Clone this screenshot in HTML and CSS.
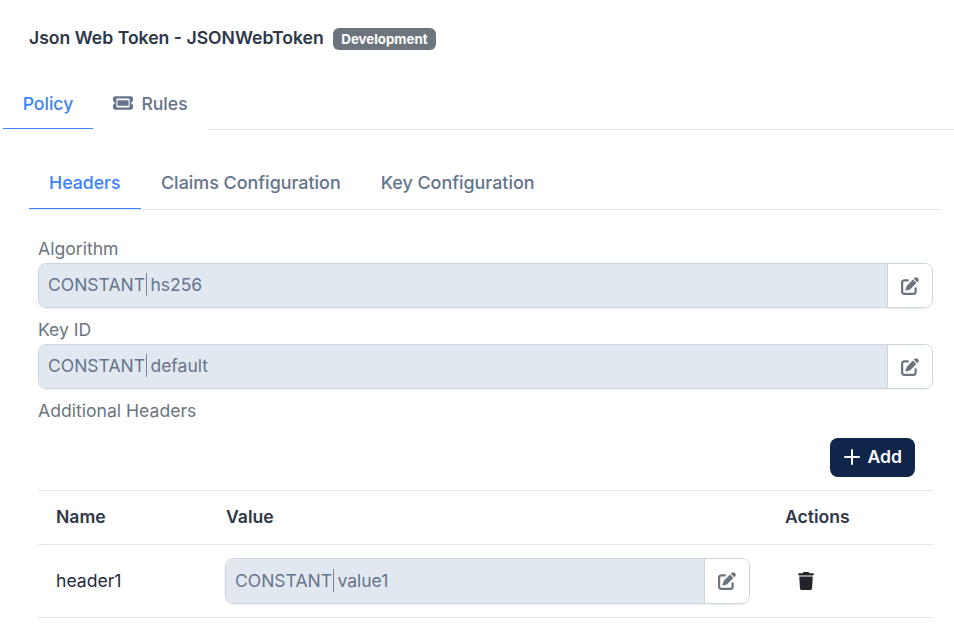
FILE: index.html
```html
<!DOCTYPE html>
<html lang="en">
<head>
<meta charset="utf-8">
<title>Json Web Token</title>
<link rel="stylesheet" href="styles.css">
</head>
<body>
<header class="title-row">
  <h1 class="title">Json Web Token - JSONWebToken</h1>
  <span class="badge">Development</span>
</header>
<nav class="tabs">
  <a class="tab tab-active">Policy</a>
  <a class="tab tab-rules">
    <svg class="icon-ticket" viewBox="0 0 576 512"><path fill="currentColor" d="M64 64C28.7 64 0 92.7 0 128v64c0 8.8 7.4 15.7 15.7 18.6C34.5 217.1 48 235 48 256s-13.5 38.9-32.3 45.4C7.4 304.3 0 311.2 0 320v64c0 35.3 28.7 64 64 64H512c35.3 0 64-28.7 64-64V320c0-8.8-7.4-15.7-15.7-18.6C541.5 294.9 528 277 528 256s13.5-38.9 32.3-45.4c8.3-2.9 15.7-9.8 15.7-18.6V128c0-35.3-28.7-64-64-64H64zm64 112l0 160H448V176H128zM96 160c0-17.7 14.3-32 32-32H448c17.7 0 32 14.3 32 32V352c0 17.7-14.3 32-32 32H128c-17.7 0-32-14.3-32-32V160z"/></svg>
    Rules
  </a>
  <span class="tabs-rest"></span>
</nav>
<section class="panel">
  <nav class="subtabs">
    <a class="subtab subtab-active">Headers</a>
    <a class="subtab">Claims Configuration</a>
    <a class="subtab">Key Configuration</a>
  </nav>
  <form class="form">
    <label class="label">Algorithm</label>
    <div class="field">
      <div class="value"><span>CONSTANT</span><i class="sep"></i><span>hs256</span></div>
      <button type="button" class="edit"><svg class="icon-edit" viewBox="0 0 512 512"><path fill="currentColor" d="M471.6 21.7c-21.9-21.9-57.3-21.9-79.2 0L362.3 51.7l97.9 97.9 30.1-30.1c21.9-21.9 21.9-57.3 0-79.2L471.6 21.7zm-299.2 220c-6.1 6.1-10.8 13.6-13.5 21.9l-29.6 88.8c-2.9 8.6-.6 18.1 5.8 24.6s15.9 8.7 24.6 5.8l88.8-29.6c8.2-2.7 15.7-7.4 21.9-13.5L437.7 172.3 339.7 74.3 172.4 241.7zM96 64C43 64 0 107 0 160V416c0 53 43 96 96 96H352c53 0 96-43 96-96V320c0-17.7-14.3-32-32-32s-32 14.3-32 32v96c0 17.7-14.3 32-32 32H96c-17.7 0-32-14.3-32-32V160c0-17.7 14.3-32 32-32h96c17.7 0 32-14.3 32-32s-14.3-32-32-32H96z"/></svg></button>
    </div>
    <label class="label">Key ID</label>
    <div class="field">
      <div class="value"><span>CONSTANT</span><i class="sep"></i><span>default</span></div>
      <button type="button" class="edit"><svg class="icon-edit" viewBox="0 0 512 512"><path fill="currentColor" d="M471.6 21.7c-21.9-21.9-57.3-21.9-79.2 0L362.3 51.7l97.9 97.9 30.1-30.1c21.9-21.9 21.9-57.3 0-79.2L471.6 21.7zm-299.2 220c-6.1 6.1-10.8 13.6-13.5 21.9l-29.6 88.8c-2.9 8.6-.6 18.1 5.8 24.6s15.9 8.7 24.6 5.8l88.8-29.6c8.2-2.7 15.7-7.4 21.9-13.5L437.7 172.3 339.7 74.3 172.4 241.7zM96 64C43 64 0 107 0 160V416c0 53 43 96 96 96H352c53 0 96-43 96-96V320c0-17.7-14.3-32-32-32s-32 14.3-32 32v96c0 17.7-14.3 32-32 32H96c-17.7 0-32-14.3-32-32V160c0-17.7 14.3-32 32-32h96c17.7 0 32-14.3 32-32s-14.3-32-32-32H96z"/></svg></button>
    </div>
    <label class="label">Additional Headers</label>
    <div class="add-row">
      <button type="button" class="add"><svg class="icon-plus" viewBox="0 0 16 16"><path d="M8 1v14M1 8h14" stroke="currentColor" stroke-width="2" fill="none" stroke-linecap="round"/></svg>Add</button>
    </div>
    <table class="table">
      <thead>
        <tr><th class="col-name">Name</th><th class="col-value">Value</th><th class="col-actions">Actions</th></tr>
      </thead>
      <tbody>
        <tr>
          <td class="col-name">header1</td>
          <td class="col-value">
            <div class="field field-row">
              <div class="value"><span>CONSTANT</span><i class="sep"></i><span>value1</span></div>
              <button type="button" class="edit"><svg class="icon-edit" viewBox="0 0 512 512"><path fill="currentColor" d="M471.6 21.7c-21.9-21.9-57.3-21.9-79.2 0L362.3 51.7l97.9 97.9 30.1-30.1c21.9-21.9 21.9-57.3 0-79.2L471.6 21.7zm-299.2 220c-6.1 6.1-10.8 13.6-13.5 21.9l-29.6 88.8c-2.9 8.6-.6 18.1 5.8 24.6s15.9 8.7 24.6 5.8l88.8-29.6c8.2-2.7 15.7-7.4 21.9-13.5L437.7 172.3 339.7 74.3 172.4 241.7zM96 64C43 64 0 107 0 160V416c0 53 43 96 96 96H352c53 0 96-43 96-96V320c0-17.7-14.3-32-32-32s-32 14.3-32 32v96c0 17.7-14.3 32-32 32H96c-17.7 0-32-14.3-32-32V160c0-17.7 14.3-32 32-32h96c17.7 0 32-14.3 32-32s-14.3-32-32-32H96z"/></svg></button>
            </div>
          </td>
          <td class="col-actions">
            <svg class="icon-trash" viewBox="0 0 448 512"><path fill="currentColor" d="M135.2 17.7L128 32H32C14.3 32 0 46.3 0 64S14.3 96 32 96H416c17.7 0 32-14.3 32-32s-14.3-32-32-32H320l-7.2-14.3C307.4 6.8 296.3 0 284.2 0H163.8c-12.1 0-23.2 6.8-28.6 17.7zM416 128H32L53.2 467c1.6 25.3 22.6 45 47.9 45H346.9c25.3 0 46.3-19.7 47.9-45L416 128z"/></svg>
          </td>
        </tr>
      </tbody>
    </table>
  </form>
</section>
</body>
</html>
```

FILE: styles.css
```css
* { box-sizing: border-box; }
html, body { margin: 0; padding: 0; }
body {
  height: 632px;
  overflow: hidden;
  background: #fff;
  font-family: Inter, "Liberation Sans", sans-serif;
  font-size: 17.6px;
  color: #212529;
}
.title-row {
  display: flex;
  align-items: center;
  gap: 9px;
  height: 76px;
  padding: 0 0 2px 29px;
}
.title { margin: 0; font-size: 17.6px; font-weight: 600; color: #2d3748; }
.badge {
  display: inline-block;
  margin-top: 4px;
  padding: 4px 8.5px;
  background: #6c757d;
  border-radius: 6px;
  color: #fff;
  font-size: 13.3px;
  font-weight: 700;
  line-height: 14px;
}
.tabs {
  display: flex;
  align-items: flex-end;
  height: 54px;
  padding-left: 3px;
}
.tab {
  display: flex;
  align-items: center;
  justify-content: center;
  height: 100%;
  font-size: 17.6px;
  font-weight: 500;
  color: #64748b;
}
.tab-active { width: 90px; color: #3b82f6; border-bottom: 1px solid #3b82f6; margin-bottom: 1px; padding-top: 3px; }
.tab-rules { width: 115px; gap: 8px; }
.icon-ticket { width: 20px; height: 18px; }
.tabs-rest { flex: 1; border-bottom: 1px solid #e2e8f0; }
.panel { padding: 0 13px 0 29px; }
.subtabs { display: flex; align-items: flex-end; height: 80px; border-bottom: 1px solid #e2e8f0; }
.subtab {
  display: flex;
  align-items: center;
  height: 54px;
  padding: 0 20px;
  font-weight: 500;
  font-size: 17.9px;
  color: #64748b;
}
.subtab-active { width: 112px; color: #3b82f6; border-bottom: 1px solid #3b82f6; padding-top: 2px; font-size: 17.7px; }
.form { padding: 0 8px 0 9px; }
.label {
  display: block;
  color: #6c757d;
  font-size: 17.6px;
  line-height: 24px;
  height: 24px;
}
.form .label:first-child { margin-top: 27px; }
.field {
  display: flex;
  height: 45px;
  margin: 2px 0 10px;
  border: 1px solid #cbd5e1;
  border-radius: 8px;
  overflow: hidden;
  box-shadow: 0 1px 2px rgba(0, 0, 0, .05);
}
.value {
  flex: 1;
  display: flex;
  align-items: center;
  padding: 0 0 2px 9px;
  background: #e2e8f0;
  border-right: 1px solid #cbd5e1;
  color: #64748b;
  font-size: 17.5px;
}
.sep { display: inline-block; width: 1.5px; height: 23px; margin: 0 3px 0 1px; background: #7d8694; }
.edit {
  display: flex;
  align-items: center;
  justify-content: center;
  width: 44px;
  padding: 0;
  background: #fff;
  border: 0;
  color: #6c757d;
}
.icon-edit { width: 18px; height: 18px; }
.add-row { display: flex; justify-content: flex-end; padding: 15px 18px 13px 0; }
.add {
  display: flex;
  align-items: center;
  gap: 8px;
  height: 39px;
  padding: 0 13px 2px 14px;
  background: #10254a;
  border: 0;
  border-radius: 8px;
  color: #fff;
  font-family: inherit;
  font-size: 17.6px;
  font-weight: 600;
}
.icon-plus { width: 16px; height: 16px; }
.table { width: 100%; border-collapse: collapse; table-layout: fixed; }
.table th, .table td { padding: 0 18px; border-top: 1px solid #e2e8f0; border-bottom: 1px solid #e2e8f0; text-align: left; }
.table th { height: 54px; padding-bottom: 2px; font-weight: 600; color: #2d3748; font-size: 17.6px; }
.table td { height: 73px; font-size: 17.6px; color: #1f2937; }
.table td.col-name { padding-bottom: 2px; }
.col-name { width: 170px; }
.col-actions { width: 166px; }
.field-row { height: 46px; margin: 0 -1px; }
.icon-trash { display: block; width: 16px; height: 18px; color: #212529; margin-left: 13px; }
```
